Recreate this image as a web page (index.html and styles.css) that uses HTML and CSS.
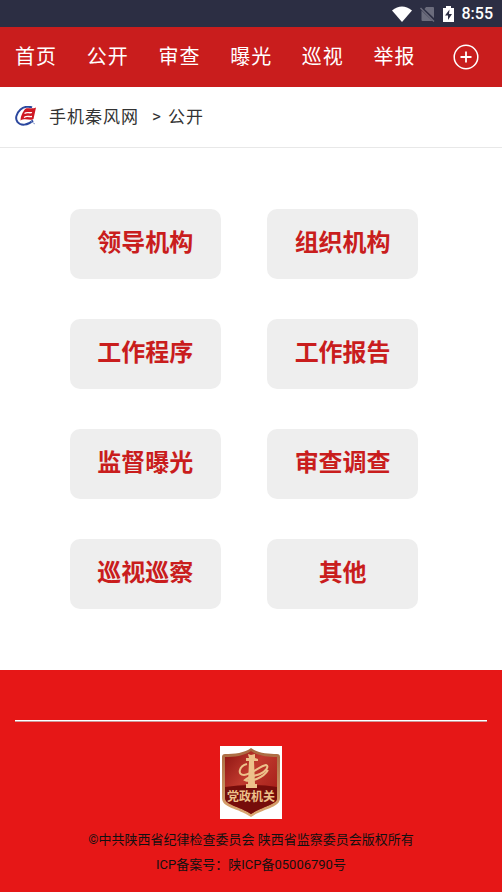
FILE: index.html
```html
<!DOCTYPE html>
<html lang="zh-cn">

<head>
    <meta charset="utf-8" />
    <meta name="viewport" content="width=device-width,initial-scale=1.0" />
    <title>公开 - 手机秦风网</title>
    <link rel="stylesheet" href="styles.css">
</head>

<body>
    <div class="status-bar">
        <svg class="wifi" width="20" height="16" viewBox="0 0 20 16">
            <path d="M0 4.500Q10-3.500 20 4.500L10 16Z" fill="#fff" />
        </svg>
        <svg class="sim" width="15" height="16" viewBox="0 0 15 16">
            <path d="M6 1H13Q14 1 14 2V12L4.500 3ZM1.500 4.500L12.500 15H2.500Q1.500 15 1.500 14Z" fill="#6b6c7c" />
            <path d="M.5 2L14 15.500" stroke="#6b6c7c" stroke-width="1.400" />
        </svg>
        <svg class="battery" width="11" height="16" viewBox="0 0 11 16">
            <path d="M3 0h5v2h3v14H0V2h3z" fill="#fff" />
            <path d="M6.500 3.500L2 9.500h3V14l4-6H6z" fill="#2c2e43" />
        </svg>
        <span class="time">8:55</span>
    </div>
    <nav class="nav">
        <a href="#">首页</a>
        <a href="#">公开</a>
        <a href="#">审查</a>
        <a href="#">曝光</a>
        <a href="#">巡视</a>
        <a href="#">举报</a>
        <button class="more" type="button" aria-label="更多">
            <svg width="26" height="26" viewBox="0 0 26 26" fill="none" stroke="#fff">
                <circle cx="13" cy="13" r="11.800" stroke-width="1.500" />
                <path d="M7.500 13h11M13 7.500v11" stroke-width="1.800" />
            </svg>
        </button>
    </nav>
    <div class="crumb">
        <svg class="logo" width="22" height="20" viewBox="0 0 22 20">
            <path d="M17 1.500C14 0 9 .5 5.500 3.500C1 7.500 0 13 2.500 16C5.500 20 13 19.500 18 14.500" fill="none" stroke="#2b479e" stroke-width="2" />
            <path d="M9 4.500C11 0 15 4 21 1.500L18.500 13C15 15.500 11 11.500 5.500 14.500C5.500 10.500 7 7.500 9 4.500Z" fill="#cf1722" />
            <path d="M9.500 7.500C12 5.500 14 7.500 17 6.500M9 11.500C12 9.500 14 11 17 10.500" fill="none" stroke="#fff" stroke-width="1.300" />
            <path d="M16 15.500L20 18" stroke="#8fa0cf" stroke-width="1" />
        </svg>
        <a href="#">手机秦风网</a>
        <span>&gt;</span>
        <a href="#">公开</a>
    </div>
    <div class="menu">
        <a href="#">领导机构</a>
        <a href="#">组织机构</a>
        <a href="#">工作程序</a>
        <a href="#">工作报告</a>
        <a href="#">监督曝光</a>
        <a href="#">审查调查</a>
        <a href="#">巡视巡察</a>
        <a href="#">其他</a>
    </div>
    <footer class="footer">
        <hr>
        <a class="badge" href="#">
            <svg width="62" height="73" viewBox="0 0 62 73">
                <defs>
                    <linearGradient id="shield" x1="0" y1="0" x2="1" y2="1">
                        <stop offset="0" stop-color="#8d1412" />
                        <stop offset=".4" stop-color="#c03a2e" />
                        <stop offset="1" stop-color="#9b1411" />
                    </linearGradient>
                    <linearGradient id="gold" x1="0" y1="0" x2="0" y2="1">
                        <stop offset="0" stop-color="#a8673f" />
                        <stop offset="1" stop-color="#dcab74" />
                    </linearGradient>
                </defs>
                <path d="M0 0h62v73H0z" fill="#fff" />
                <path d="M31 2C37 7 48 8 57 8Q60 8 60 11V52C60 62 44 62 31 71C18 62 2 62 2 52V11Q2 8 5 8C14 8 25 7 31 2Z" fill="url(#gold)" />
                <path d="M31 5C38 10 48 11 57 11V52C57 59 43 60 31 68C19 60 5 59 5 52V11C14 11 24 10 31 5Z" fill="url(#shield)" />
                <path d="M5 41Q31 37 57 41V52C57 59 43 60 31 68C19 60 5 59 5 52Z" fill="#760d0b" />
                <path d="M28 8l3 1 4-1v4l3 1v2h-4l1 23h2v4H26v-4h2l1-23h-3v-3h3z" fill="#edc18a" />
                <path d="M27 18C19 20 17 29 24 29C32 28 40 20 46 19C50 20 45 26 40 28C35 30 30 30 25 34C31 37 44 31 48 24" fill="none" stroke="#edc18a" stroke-width="2" />
                <text class="badge-text" x="31" y="55" text-anchor="middle">党政机关</text>
            </svg>
        </a>
        <p>©中共陕西省纪律检查委员会 陕西省监察委员会版权所有</p>
        <p>ICP备案号：陕ICP备05006790号</p>
    </footer>
</body>

</html>
```
FILE: styles.css
```css
* {
    box-sizing: border-box;
}

body {
    margin: 0;
    background: #fff;
    color: #333;
    font-family: Roboto, "Noto Sans CJK SC", sans-serif;
}

a {
    color: inherit;
    text-decoration: none;
}

svg {
    display: block;
}

.status-bar {
    display: flex;
    align-items: center;
    justify-content: flex-end;
    gap: 8px;
    height: 27px;
    padding-right: 9px;
    background: #2c2e43;
    color: #fff;
}

.time {
    font-size: 16px;
    font-weight: 500;
    line-height: 28px;
}

.nav {
    display: grid;
    grid-template-columns: repeat(7, 1fr);
    height: 60px;
    background: #c91d1d;
    color: #fff;
    font-size: 20px;
    letter-spacing: 1px;
    line-height: 60px;
}

.nav a {
    padding-left: 15px;
}

.more {
    display: flex;
    align-items: center;
    justify-content: center;
    padding: 0;
    border: 0;
    background: none;
}

.crumb {
    display: flex;
    align-items: center;
    height: 61px;
    padding: 0 15px 3px;
    border-bottom: 1px solid #e8e8e8;
    font-size: 17px;
    letter-spacing: 1px;
}

.logo {
    margin-right: 12px;
}

.crumb span {
    margin: 0 6px 0 13px;
}

.menu {
    display: grid;
    grid-template-columns: 31% 31%;
    justify-content: center;
    gap: 40px 46px;
    padding: 61px 14px 61px 0;
}

.menu a {
    height: 70px;
    border-radius: 10px;
    background: #eee;
    color: #c91d1d;
    font-size: 24px;
    font-weight: bold;
    line-height: 68px;
    text-align: center;
}

.footer {
    padding: 50px 15px 15px;
    background: #e61717;
    color: #111;
    font-size: 13px;
    line-height: 25px;
    text-align: center;
}

.footer hr {
    height: 2px;
    margin: 0 0 24px;
    border: 0;
    border-top: 1px solid #fff;
    border-bottom: 1px solid #c99;
}

.footer p {
    margin: 0;
}

.badge {
    display: flex;
    justify-content: center;
    margin-bottom: 8px;
}

.badge-text {
    fill: #edc18a;
    font-size: 12px;
    font-weight: bold;
}
```
